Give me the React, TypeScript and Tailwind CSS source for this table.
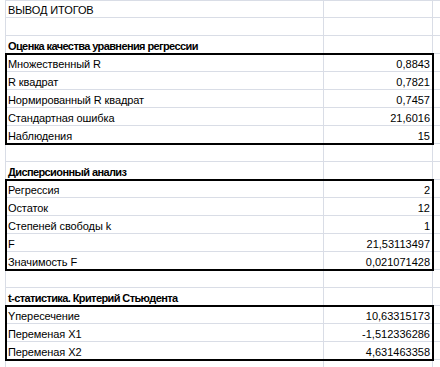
import React from "react";

type R = { a: string; b?: string };

const box1: R[] = [
  { a: "Множественный R", b: "0,8843" },
  { a: "R квадрат", b: "0,7821" },
  { a: "Нормированный R квадрат", b: "0,7457" },
  { a: "Стандартная ошибка", b: "21,6016" },
  { a: "Наблюдения", b: "15" },
];
const box2: R[] = [
  { a: "Регрессия", b: "2" },
  { a: "Остаток", b: "12" },
  { a: "Степеней свободы k", b: "1" },
  { a: "F", b: "21,53113497" },
  { a: "Значимость F", b: "0,021071428" },
];
const box3: R[] = [
  { a: "Yпересечение", b: "10,63315173" },
  { a: "Переменая X1", b: "-1,512336286" },
  { a: "Переменая X2", b: "4,631463358" },
];

function Row({ a, b, bold, first }: { a?: string; b?: string; bold?: boolean; first?: boolean }) {
  return (
    <div className={`flex ${first ? "h-[17px]" : "h-[18px]"}`}>
      <div
        className={`w-[318px] shrink-0 border-r border-b border-[#d9dde6] flex items-end pl-[2px] leading-[14px] whitespace-nowrap ${
          bold ? "font-bold tracking-[-0.6px]" : "tracking-[-0.1px]"
        }`}
      >
        {a}
      </div>
      <div className="w-[109px] shrink-0 border-r border-b border-[#d9dde6] flex items-end justify-end pr-[2px] leading-[14px] whitespace-nowrap">
        {b}
      </div>
      <div className="flex-1 border-b border-[#d9dde6]" />
    </div>
  );
}

function Box({ rows }: { rows: R[] }) {
  return (
    <div className="flex">
      <div className="w-[427px] shrink-0 relative z-10 outline-2 outline-black -outline-offset-1">
        {rows.map((r, i) => (
          <div key={i} className="flex h-[18px]">
            <div className="w-[318px] shrink-0 border-r border-b border-[#d9dde6] flex items-end pl-[2px] leading-[14px] whitespace-nowrap tracking-[-0.1px]">
              {r.a}
            </div>
            <div className="w-[109px] shrink-0 border-r border-b border-[#d9dde6] flex items-end justify-end pr-[2px] leading-[14px] whitespace-nowrap">
              {r.b}
            </div>
          </div>
        ))}
      </div>
      <div className="flex-1">
        {rows.map((_, i) => (
          <div key={i} className="h-[18px] border-b border-[#d9dde6]" />
        ))}
      </div>
    </div>
  );
}

export default function App() {
  return (
    <div className="w-[440px] h-[367px] overflow-hidden bg-white pl-[5px] font-['Liberation_Sans',Arial,sans-serif] text-[11px] text-black">
      <div className="border-l border-t border-[#d9dde6]">
        <Row a="ВЫВОД ИТОГОВ" first />
        <Row />
        <Row a="Оценка качества уравнения регрессии" bold />
        <Box rows={box1} />
        <Row />
        <Row a="Дисперсионный анализ" bold />
        <Box rows={box2} />
        <Row />
        <Row a="t-статистика. Критерий Стьюдента" bold />
        <Box rows={box3} />
        <Row />
      </div>
    </div>
  );
}
